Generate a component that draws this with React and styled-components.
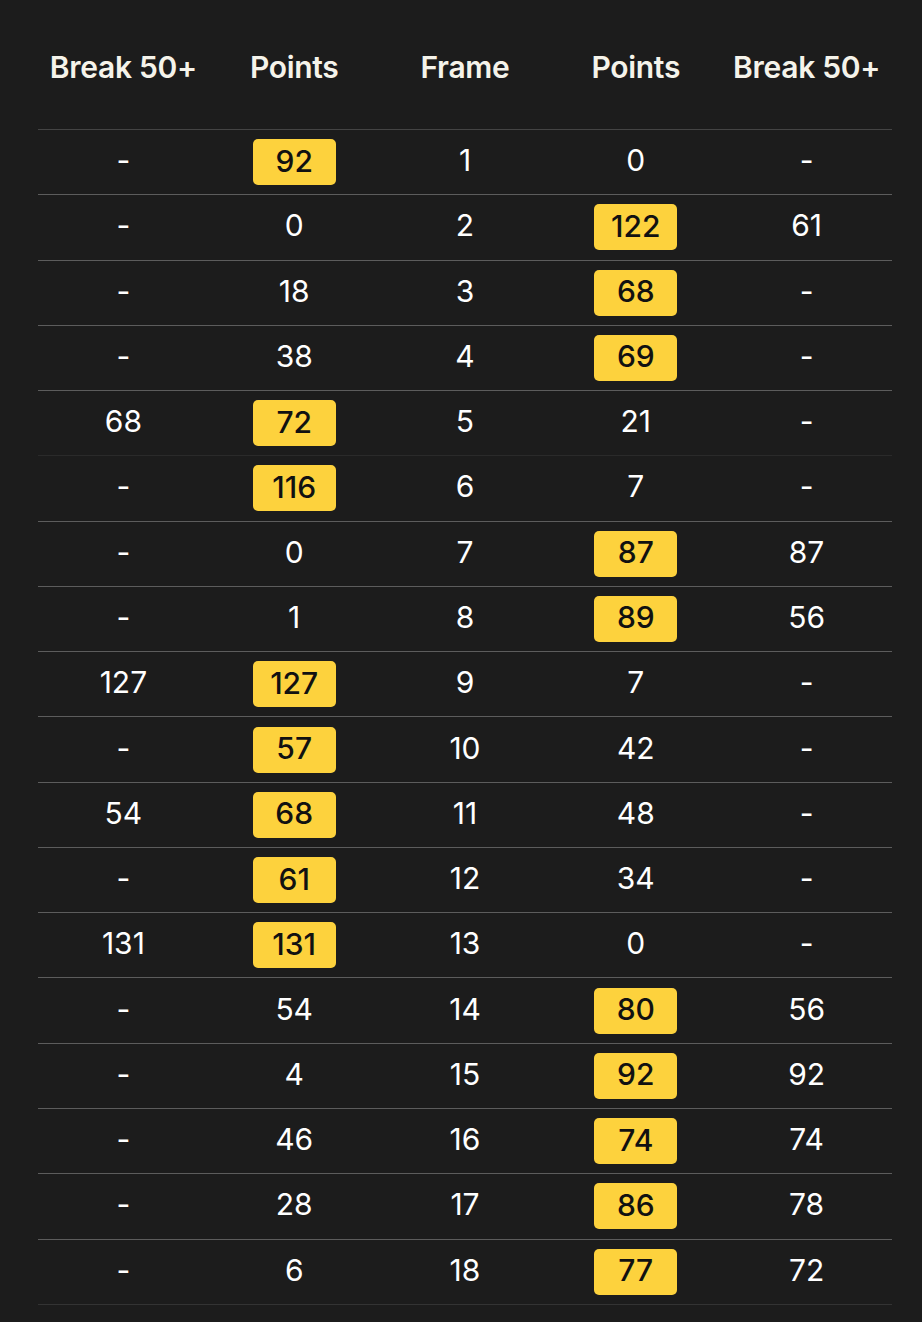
import styled, {createGlobalStyle} from "styled-components";

const GlobalStyle = createGlobalStyle`
  body {
    margin: 0;
    background: #1c1c1c;
    font-family: Inter, "Noto Sans", sans-serif;
  }
`

const frames = [
    ["-", 92, 1, 0, "-", "left"],
    ["-", 0, 2, 122, 61, "right"],
    ["-", 18, 3, 68, "-", "right"],
    ["-", 38, 4, 69, "-", "right"],
    [68, 72, 5, 21, "-", "left"],
    ["-", 116, 6, 7, "-", "left"],
    ["-", 0, 7, 87, 87, "right"],
    ["-", 1, 8, 89, 56, "right"],
    [127, 127, 9, 7, "-", "left"],
    ["-", 57, 10, 42, "-", "left"],
    [54, 68, 11, 48, "-", "left"],
    ["-", 61, 12, 34, "-", "left"],
    [131, 131, 13, 0, "-", "left"],
    ["-", 54, 14, 80, 56, "right"],
    ["-", 4, 15, 92, 92, "right"],
    ["-", 46, 16, 74, 74, "right"],
    ["-", 28, 17, 86, 78, "right"],
    ["-", 6, 18, 77, 72, "right"],
]

// the screenshot has a couple of separators that barely show
const lineColour = (i) => {
    if (i === 0) return "#444"
    if (i === 5) return "#2a2a2a"
    return "#5c5c5c"
}

const App = () => {
    return (
        <Page>
            <GlobalStyle/>
            <Header>
                <HeadCell>Break 50+</HeadCell>
                <HeadCell>Points</HeadCell>
                <HeadCell>Frame</HeadCell>
                <HeadCell>Points</HeadCell>
                <HeadCell>Break 50+</HeadCell>
            </Header>
            {frames.map((f, i) => (
                <Row key={f[2]} $line={lineColour(i)}>
                    <Cell><Value>{f[0]}</Value></Cell>
                    <Cell>{f[5] === "left" ? <Badge>{f[1]}</Badge> : <Value>{f[1]}</Value>}</Cell>
                    <Cell><Value>{f[2]}</Value></Cell>
                    <Cell>{f[5] === "right" ? <Badge>{f[3]}</Badge> : <Value>{f[3]}</Value>}</Cell>
                    <Cell><Value>{f[4]}</Value></Cell>
                </Row>
            ))}
            <Bottom/>
        </Page>
    )
}

const Page = styled.div`
  width: 854px;
  margin: 0 38px;
  color: #fff;
`

const Header = styled.div`
  display: grid;
  grid-template-columns: repeat(5, 1fr);
  align-items: center;
  height: 129px;
  padding-top: 4px;
  box-sizing: border-box;
`

const HeadCell = styled.div`
  text-align: center;
  font-size: 30px;
  font-weight: 600;
  color: #f5f3ea;
  letter-spacing: -0.3px;
`

const Row = styled.div`
  display: grid;
  grid-template-columns: repeat(5, 1fr);
  align-items: center;
  height: 65.28px;
  box-sizing: border-box;
  border-top: 1px solid ${props => props.$line};
`

const Cell = styled.div`
  display: flex;
  justify-content: center;
  align-items: center;
  font-size: 30px;
  font-weight: 400;
  color: #fff;
`

const Value = styled.span`
  line-height: 1;
  padding-bottom: 4px;
`

const Badge = styled.span`
  display: flex;
  align-items: center;
  justify-content: center;
  width: 83px;
  height: 46px;
  padding-bottom: 3px;
  box-sizing: border-box;
  border-radius: 5px;
  background: #fdd23d;
  color: #111;
  font-weight: 500;
  line-height: 1;
`

const Bottom = styled.div`
  border-top: 1px solid #333;
  height: 17px;
`

export default App
